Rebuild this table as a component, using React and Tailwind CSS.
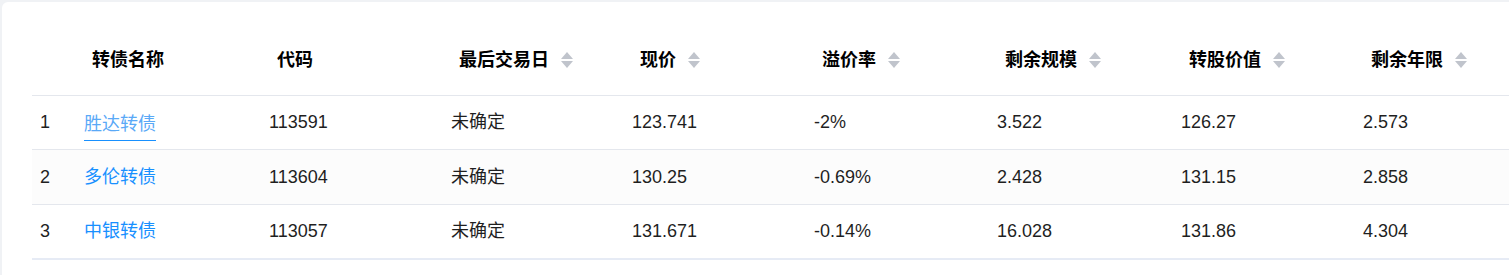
const columns = [
  { key: "idx", title: "", width: "w-[44px]" },
  { key: "name", title: "转债名称", width: "w-[185px]" },
  { key: "code", title: "代码", width: "w-[182px]" },
  { key: "date", title: "最后交易日", width: "w-[181px]", sort: true },
  { key: "price", title: "现价", width: "w-[182px]", sort: true },
  { key: "premium", title: "溢价率", width: "w-[183px]", sort: true },
  { key: "scale", title: "剩余规模", width: "w-[184px]", sort: true },
  { key: "value", title: "转股价值", width: "w-[182px]", sort: true },
  { key: "years", title: "剩余年限", width: "w-[182px]", sort: true },
];

const rows = [
  { idx: 1, name: "胜达转债", code: "113591", date: "未确定", price: "123.741", premium: "-2%", scale: "3.522", value: "126.27", years: "2.573" },
  { idx: 2, name: "多伦转债", code: "113604", date: "未确定", price: "130.25", premium: "-0.69%", scale: "2.428", value: "131.15", years: "2.858" },
  { idx: 3, name: "中银转债", code: "113057", date: "未确定", price: "131.671", premium: "-0.14%", scale: "16.028", value: "131.86", years: "4.304" },
];

// up/down caret pair used in sortable headers
function SortIcon() {
  return (
    <svg width="14" height="18" viewBox="0 0 14 18" className="ml-[11px] inline-block">
      <path d="M7 1 L13 8 L1 8 Z" fill="#c0c4cc" />
      <path d="M1 10 L13 10 L7 17 Z" fill="#c0c4cc" />
    </svg>
  );
}

export default function App() {
  return (
    <div
      className="min-h-[275px] w-[1509px] overflow-hidden bg-[#f0f2f5] pl-[2px] pt-[2px]"
      style={{ fontFamily: 'Arial, "Liberation Sans", "Noto Sans CJK SC", sans-serif' }}
    >
      <div className="h-[273px] w-[1560px] rounded-tl-[6px] bg-white pl-[30px] pt-[24px]">
        <table className="table-fixed border-collapse text-[18px] leading-[24px] text-[#1f1f1f]">
          <thead>
            <tr className="h-[69px] border-b border-[#e4e7ed]">
              {columns.map((c) => (
                <th key={c.key} className={`${c.width} pl-[16px] text-left align-middle font-bold text-black`}>
                  <span className="inline-flex items-center">
                    {c.title}
                    {c.sort && <SortIcon />}
                  </span>
                </th>
              ))}
            </tr>
          </thead>
          <tbody>
            {rows.map((r, i) => (
              <tr
                key={r.idx}
                className={`${i === 0 ? "h-[54px]" : "h-[55px]"} ${i === 2 ? "border-b-2 border-[#e6ebf5]" : "border-b border-[#e4e7ed]"} ${i === 1 ? "bg-[#fcfcfc]" : "bg-white"}`}
              >
                <td className="pl-[8px]">{r.idx}</td>
                <td className="pl-[8px]">
                  {i === 0 ? (
                    <span className="inline-block border-b border-[#1890ff] pb-[4px] pt-[9px] text-[#5aa9f7]">{r.name}</span>
                  ) : (
                    <span className="text-[#1890ff]">{r.name}</span>
                  )}
                </td>
                <td className="pl-[8px]">{r.code}</td>
                <td className="pl-[8px]">{r.date}</td>
                <td className="pl-[8px]">{r.price}</td>
                <td className="pl-[8px]">{r.premium}</td>
                <td className="pl-[8px]">{r.scale}</td>
                <td className="pl-[8px]">{r.value}</td>
                <td className="pl-[8px]">{r.years}</td>
              </tr>
            ))}
          </tbody>
        </table>
      </div>
    </div>
  );
}
